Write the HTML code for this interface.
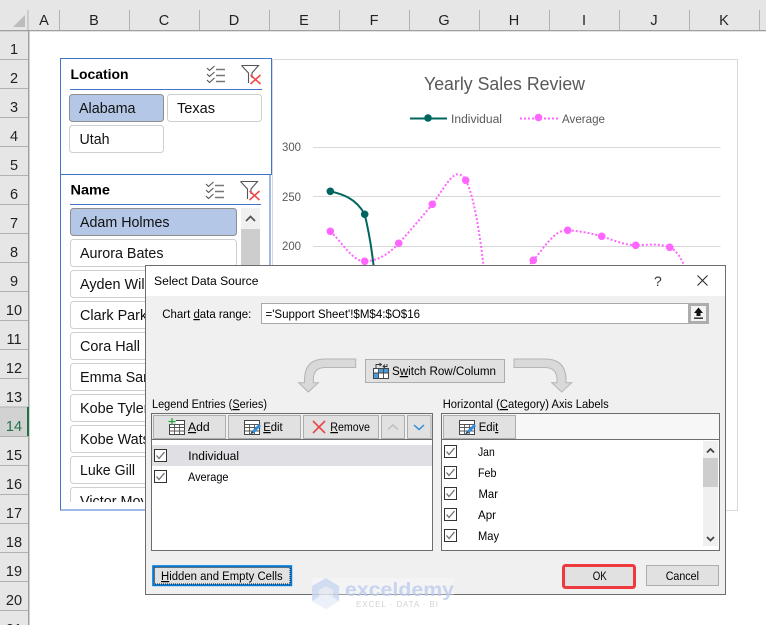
<!DOCTYPE html>
<html><head><meta charset="utf-8"><style>
html,body{margin:0;padding:0;background:#fff}
svg{display:block}
text{font-family:"Liberation Sans",sans-serif;fill:#000;font-size:12.3px}
.h{font-size:14.5px;fill:#222;text-anchor:middle}
.s{font-size:14.4px;fill:#111}
.g{fill:#595959}
.u{text-decoration:underline}
</style></head><body>
<svg width="766" height="625" viewBox="0 0 766 625" xmlns="http://www.w3.org/2000/svg">
<defs>
<clipPath id="c1"><rect x="61" y="205" width="210" height="297"/></clipPath>
<g id="chk"><rect x=".5" y=".5" width="12" height="12" fill="#fff" stroke="#333"/><path d="M2.5 6.5L5 9.5L10.5 3" fill="none" stroke="#707070" stroke-width="1.3"/></g>
<g id="tbl"><rect x=".5" y=".5" width="15" height="14" fill="#fff" stroke="#444"/><path d="M.5 4.5H15.5M.5 7.5H15.5M.5 11H15.5M5.5 4.5V14.5M10.5 4.5V14.5" fill="none" stroke="#555" stroke-width=".9"/></g>
<g id="multi" fill="none"><path d="M0 2L2.5 4.5L7.5 0M0 8L2.5 10.5L7.5 6M0 14L2.5 16.5L7.5 12" stroke="#555" stroke-width="1.1"/><path d="M9 3.5H18M9 9.5H18M9 15.5H18" stroke="#777" stroke-width="1.5"/></g>
<g id="filt" fill="none"><path d="M.5 .5H17.5L11 8V13M7.5 18V8L.5 .5" stroke="#555" stroke-width="1.1"/><path d="M9.5 10L19.5 19M19.5 10L9.5 19" stroke="#f0484a" stroke-width="1.6"/></g>
</defs>

<!-- sheet headers -->
<rect width="766" height="30" fill="#e6e6e6"/>
<rect y="30" width="28" height="595" fill="#e6e6e6"/>
<path d="M25 15V27H13Z" fill="#bcbcbc"/>
<rect x="0" y="407" width="28" height="29" fill="#d2d2d2"/>
<path d="M59.5 10V30M129.5 10V30M199.5 10V30M269.5 10V30M339.5 10V30M409.5 10V30M479.5 10V30M549.5 10V30M619.5 10V30M689.5 10V30M759.5 10V30M28 10V30" stroke="#b1b1b1" fill="none"/>
<path d="M0 59.5H28M0 88.5H28M0 117.5H28M0 146.5H28M0 175.5H28M0 204.5H28M0 233.5H28M0 262.5H28M0 291.5H28M0 320.5H28M0 349.5H28M0 378.5H28M0 407H28M0 436.5H28M0 465.5H28M0 494.5H28M0 523.5H28M0 552.5H28M0 581.5H28M0 610.5H28" stroke="#b1b1b1" fill="none"/>
<rect x="28" y="30" width="1.5" height="595" fill="#a0a0a0"/>
<rect x="0" y="30" width="766" height="1.3" fill="#a0a0a0"/>
<rect x="27" y="407" width="2" height="29" fill="#217346"/>
<g class="colh">
<text class="h" x="44" y="25">A</text><text class="h" x="94" y="25">B</text><text class="h" x="164" y="25">C</text><text class="h" x="234" y="25">D</text><text class="h" x="304" y="25">E</text><text class="h" x="374" y="25">F</text><text class="h" x="444" y="25">G</text><text class="h" x="514" y="25">H</text><text class="h" x="584" y="25">I</text><text class="h" x="654" y="25">J</text><text class="h" x="724" y="25">K</text>
</g>
<text class="h" x="14" y="54">1</text><text class="h" x="14" y="83">2</text><text class="h" x="14" y="112">3</text><text class="h" x="14" y="141">4</text><text class="h" x="14" y="170">5</text><text class="h" x="14" y="199">6</text><text class="h" x="14" y="228">7</text><text class="h" x="14" y="257">8</text><text class="h" x="14" y="286">9</text><text class="h" x="14" y="315">10</text><text class="h" x="14" y="344">11</text><text class="h" x="14" y="373">12</text><text class="h" x="14" y="402">13</text><text class="h" x="14" y="431" style="fill:#217346">14</text><text class="h" x="14" y="460">15</text><text class="h" x="14" y="489">16</text><text class="h" x="14" y="518">17</text><text class="h" x="14" y="547">18</text><text class="h" x="14" y="576">19</text><text class="h" x="14" y="605">20</text><text class="h" x="14" y="634">21</text>

<!-- chart -->
<rect x="272.5" y="59.5" width="465" height="451" fill="#fff" stroke="#d9d9d9"/>
<text x="424" y="90" textLength="161" lengthAdjust="spacingAndGlyphs" class="g" style="font-size:18.6px">Yearly Sales Review</text>
<path d="M410 118.5H447" stroke="#00645f" stroke-width="2"/><circle cx="428" cy="118" r="3.8" fill="#00645f"/>
<text x="451" y="123" textLength="51" lengthAdjust="spacingAndGlyphs" class="g">Individual</text>
<path d="M520 118.5H558" stroke="#ff66ff" stroke-width="2" stroke-dasharray="2 2"/><circle cx="538.5" cy="117.5" r="3.8" fill="#ff66ff"/>
<text x="562" y="123" textLength="43" lengthAdjust="spacingAndGlyphs" class="g">Average</text>
<path d="M313 147.5H720.5M313 196.5H720.5M313 246.5H720.5" stroke="#d9d9d9"/>
<text x="282" y="151" textLength="19" lengthAdjust="spacingAndGlyphs" class="g">300</text>
<text x="282" y="201" textLength="19" lengthAdjust="spacingAndGlyphs" class="g">250</text>
<text x="282" y="250" textLength="19" lengthAdjust="spacingAndGlyphs" class="g">200</text>
<path d="M330.3 191.3C342 194 356 198 364.7 214.3C368 228 372 250 374 270" fill="none" stroke="#00645f" stroke-width="2"/>
<circle cx="330.3" cy="191.3" r="3.8" fill="#00645f"/><circle cx="364.7" cy="214.3" r="3.8" fill="#00645f"/>
<path d="M330.3 231.3C341 241 353 262 364.7 261.3C376 261 387 256 398.7 243.3C410 231 421 218 432.3 204.3C443 190 452 172 459 174.5C463 175.5 465 178 465.7 180.3C474 195 480 235 484 270M525 270L533.3 260.3C544 248 555 229 567.7 230.3C579 231 590 233 601.7 236.3C613 240 624 245 635.7 245.3C647 245 658 243 669.7 247.3C676 250 681 257 686 270" fill="none" stroke="#ff66ff" stroke-width="2" stroke-dasharray="2 2"/>
<g fill="#ff66ff"><circle cx="330.3" cy="231.3" r="3.8"/><circle cx="364.7" cy="261.3" r="3.8"/><circle cx="398.7" cy="243.3" r="3.8"/><circle cx="432.3" cy="204.3" r="3.8"/><circle cx="465.7" cy="180.3" r="3.8"/><circle cx="533.3" cy="260.3" r="3.8"/><circle cx="567.7" cy="230.3" r="3.8"/><circle cx="601.7" cy="236.3" r="3.8"/><circle cx="635.7" cy="245.3" r="3.8"/><circle cx="669.7" cy="247.3" r="3.8"/></g>

<!-- slicer 1 -->
<rect x="60.5" y="58.5" width="211" height="116" fill="#fff" stroke="#3f74c8"/>
<text x="70.5" y="79" textLength="58" lengthAdjust="spacingAndGlyphs" style="font-size:13.5px;font-weight:bold">Location</text>
<use href="#multi" x="207" y="66"/><use href="#filt" x="241" y="65"/>
<rect x="70" y="89" width="192" height="1" fill="#3f74c8"/>
<rect x="69.5" y="94.5" width="94" height="27" rx="3" fill="#b4c7e7" stroke="#8e8e8e"/>
<rect x="167.5" y="94.5" width="94" height="27" rx="3" fill="#fff" stroke="#cfcfcf"/>
<rect x="69.5" y="125.5" width="94" height="27" rx="3" fill="#fff" stroke="#cfcfcf"/>
<text class="s" x="79" y="113" textLength="56.5" lengthAdjust="spacingAndGlyphs">Alabama</text>
<text class="s" x="177" y="113" textLength="38" lengthAdjust="spacingAndGlyphs">Texas</text>
<text class="s" x="79.5" y="144" textLength="30" lengthAdjust="spacingAndGlyphs">Utah</text>

<!-- slicer 2 -->
<rect x="60.5" y="174.5" width="209.5" height="335.5" fill="#fff" stroke="#3f74c8"/>
<text x="70.5" y="194.5" textLength="39.5" lengthAdjust="spacingAndGlyphs" style="font-size:13.5px;font-weight:bold">Name</text>
<use href="#multi" x="206" y="182"/><use href="#filt" x="240" y="181"/>
<rect x="70" y="204" width="191" height="1" fill="#3f74c8"/>
<g clip-path="url(#c1)">
<g fill="#fff" stroke="#cfcfcf">
<rect x="70.5" y="208.5" width="166" height="27" rx="3" fill="#b4c7e7" stroke="#8e8e8e"/>
<rect x="70.5" y="239.5" width="166" height="27" rx="3"/><rect x="70.5" y="270.5" width="166" height="27" rx="3"/><rect x="70.5" y="301.5" width="166" height="27" rx="3"/><rect x="70.5" y="332.5" width="166" height="27" rx="3"/><rect x="70.5" y="363.5" width="166" height="27" rx="3"/><rect x="70.5" y="394.5" width="166" height="27" rx="3"/><rect x="70.5" y="425.5" width="166" height="27" rx="3"/><rect x="70.5" y="456.5" width="166" height="27" rx="3"/><rect x="70.5" y="487.5" width="166" height="27" rx="3"/>
</g>
<text class="s" x="80" y="227" textLength="89.5" lengthAdjust="spacingAndGlyphs">Adam Holmes</text>
<text class="s" x="80" y="258" textLength="83.5" lengthAdjust="spacingAndGlyphs">Aurora Bates</text>
<text class="s" x="80" y="289">Ayden Wilson</text>
<text class="s" x="80" y="320">Clark Parker</text>
<text class="s" x="80" y="351" textLength="60" lengthAdjust="spacingAndGlyphs">Cora Hall</text>
<text class="s" x="80" y="382">Emma Sanders</text>
<text class="s" x="80" y="413">Kobe Tyler</text>
<text class="s" x="80" y="444">Kobe Watson</text>
<text class="s" x="80" y="475" textLength="55" lengthAdjust="spacingAndGlyphs">Luke Gill</text>
<text class="s" x="80" y="506">Victor Moyer</text>
</g>
<rect x="241" y="208" width="19" height="294" fill="#f0f0f0"/>
<rect x="241" y="229" width="19" height="70" fill="#cdcdcd"/>
<path d="M246 221L250.5 216.5L255 221" fill="none" stroke="#555" stroke-width="1.8"/>

<!-- dialog -->
<rect x="145.5" y="265.5" width="580" height="329" fill="#f0f0f0" stroke="#6d6d6d"/>
<rect x="146" y="266" width="579" height="30" fill="#fff"/>
<text x="154" y="285" textLength="104.5" lengthAdjust="spacingAndGlyphs">Select Data Source</text>
<text x="654" y="286" style="font-size:14px;fill:#333">?</text>
<path d="M697.5 275.5L707.5 285.5M707.5 275.5L697.5 285.5" stroke="#222" stroke-width="1"/>

<text x="162.3" y="318" textLength="89" lengthAdjust="spacingAndGlyphs">Chart <tspan class="u">d</tspan>ata range:</text>
<rect x="261.5" y="303.5" width="427" height="20" fill="#fff" stroke="#a8a8a8"/>
<text x="265.5" y="318" textLength="154.5" lengthAdjust="spacingAndGlyphs">='Support Sheet'!$M$4:$O$16</text>
<rect x="688" y="303" width="21" height="21" fill="#adadad"/><rect x="691" y="306" width="15" height="15" fill="#f3f3f3"/>
<path d="M698.5 307.5L703 313H700.5V316H696.5V313H694Z" fill="#111"/><rect x="694" y="317.5" width="9" height="1.3" fill="#111"/>

<path d="M355.7 359H325Q304.5 359 304.5 380V382.7H298.7L308.3 392L318.3 382.7H313.3V380Q313.3 367.5 325 367.5H355.7Z" fill="#d9d9d9" stroke="#b5b5b5"/>
<path d="M514 359H545Q566 359 566 380V382.7H571.7L561.7 392L551.7 382.7H557V380Q557 367.5 545 367.5H514Z" fill="#d9d9d9" stroke="#b5b5b5"/>

<rect x="365.5" y="359.5" width="139" height="23" fill="#e1e1e1" stroke="#adadad"/>
<g transform="translate(373,363)"><rect x=".5" y="5.5" width="15" height="10" fill="#fff" stroke="#444"/><rect x="1" y="10" width="5" height="5" fill="#4a9bdc"/><rect x="6" y="6" width="9" height="4" fill="#4a9bdc"/><path d="M.5 10H15.5M5.5 5.5V15.5M10.5 5.5V15.5" stroke="#444" stroke-width=".9" fill="none"/><path d="M3 5V1.5H8M6.5 0L8.5 1.5L6.5 3M10 3.5H14V1M12 1.5L10 3.5L12 5" stroke="#333" fill="none" stroke-width=".9"/></g>
<text x="392" y="375" textLength="104" lengthAdjust="spacingAndGlyphs">S<tspan class="u">w</tspan>itch Row/Column</text>

<text x="152" y="408" textLength="115" lengthAdjust="spacingAndGlyphs">Legend Entries (<tspan class="u">S</tspan>eries)</text>
<text x="442.7" y="408" textLength="166" lengthAdjust="spacingAndGlyphs">Horizontal (<tspan class="u">C</tspan>ategory) Axis Labels</text>

<!-- left list -->
<rect x="151.5" y="413.5" width="281" height="137" fill="#fff" stroke="#6d6d6d"/>
<path d="M152 439.5H432" stroke="#6d6d6d"/>
<rect x="152" y="414" width="280" height="25" fill="#f0f0f0"/>
<g fill="#e1e1e1" stroke="#adadad"><rect x="153.5" y="415.5" width="72" height="23"/><rect x="228.5" y="415.5" width="72" height="23"/><rect x="303.5" y="415.5" width="75" height="23"/><rect x="381.5" y="415.5" width="23" height="23"/><rect x="407.5" y="415.5" width="23.5" height="23"/></g>
<use href="#tbl" x="169" y="420"/><rect x="167" y="418" width="9" height="6" fill="#e1e1e1"/><path d="M172 418V425M168.5 421.5H175.5" stroke="#22a53b" stroke-width="1.2"/>
<text x="188" y="431" textLength="21.7" lengthAdjust="spacingAndGlyphs"><tspan class="u">A</tspan>dd</text>
<use href="#tbl" x="244" y="420"/><path d="M260 425L252.5 432.5" stroke="#2f8ddb" stroke-width="3"/><path d="M252 431L250 434.5L253.5 433Z" fill="#333"/>
<text x="263.3" y="431" textLength="19.4" lengthAdjust="spacingAndGlyphs"><tspan class="u">E</tspan>dit</text>
<path d="M313 421L325 433M325 421L313 433" stroke="#e8484a" stroke-width="1.6"/>
<text x="330.3" y="431" textLength="39.7" lengthAdjust="spacingAndGlyphs"><tspan class="u">R</tspan>emove</text>
<path d="M388 429.5L393 425L398 429.5" fill="none" stroke="#bdbdbd" stroke-width="1.5"/>
<path d="M414 425L419 429.5L424 425" fill="none" stroke="#2f8ddb" stroke-width="1.5"/>
<rect x="152" y="445" width="280" height="21" fill="#e0dfe3"/>
<use href="#chk" x="154" y="449"/><use href="#chk" x="154" y="470"/>
<text x="188.3" y="460" textLength="50.7" lengthAdjust="spacingAndGlyphs">Individual</text>
<text x="188" y="481" textLength="40.5" lengthAdjust="spacingAndGlyphs">Average</text>

<!-- right list -->
<rect x="441.5" y="413.5" width="278" height="137" fill="#fff" stroke="#6d6d6d"/>
<path d="M442 439.5H719" stroke="#6d6d6d"/>
<rect x="442" y="414" width="277" height="25" fill="#f7f7f7"/>
<rect x="443.5" y="415.5" width="72" height="23" fill="#e1e1e1" stroke="#adadad"/>
<use href="#tbl" x="459" y="420"/><path d="M475 425L467.5 432.5" stroke="#2f8ddb" stroke-width="3"/><path d="M467 431L465 434.5L468.5 433Z" fill="#333"/>
<text x="478.7" y="431" textLength="19.6" lengthAdjust="spacingAndGlyphs">Edi<tspan class="u">t</tspan></text>
<use href="#chk" x="444" y="445"/><use href="#chk" x="444" y="466"/><use href="#chk" x="444" y="487"/><use href="#chk" x="444" y="508"/><use href="#chk" x="444" y="529"/>
<text x="478" y="456" textLength="16.7" lengthAdjust="spacingAndGlyphs">Jan</text>
<text x="478" y="477" textLength="18.5" lengthAdjust="spacingAndGlyphs">Feb</text>
<text x="478.5" y="498" textLength="19.5" lengthAdjust="spacingAndGlyphs">Mar</text>
<text x="478" y="519" textLength="18" lengthAdjust="spacingAndGlyphs">Apr</text>
<text x="478" y="540" textLength="21" lengthAdjust="spacingAndGlyphs">May</text>
<rect x="703" y="441" width="15" height="105" fill="#f0f0f0"/>
<rect x="703" y="458" width="15" height="29" fill="#cdcdcd"/>
<path d="M707 452.5L710.5 449L714 452.5M707 537L710.5 540.5L714 537" fill="none" stroke="#444" stroke-width="1.8"/>

<!-- bottom buttons -->
<rect x="153.2" y="566.2" width="138" height="19" fill="#e1e1e1" stroke="#0078d7" stroke-width="2"/>
<rect x="154.5" y="567.5" width="135.5" height="16.5" fill="none" stroke="#111" stroke-dasharray="1 1"/>
<text x="161" y="580" textLength="121.7" lengthAdjust="spacingAndGlyphs"><tspan class="u">H</tspan>idden and Empty Cells</text>
<rect x="563.5" y="565.5" width="71" height="22" rx="2" fill="#e1e1e1" stroke="#ee3a3f" stroke-width="3"/>
<text x="592.7" y="580" textLength="14" lengthAdjust="spacingAndGlyphs">OK</text>
<rect x="646.5" y="565.5" width="72" height="20" fill="#e1e1e1" stroke="#adadad"/>
<text x="665.7" y="580" textLength="33.3" lengthAdjust="spacingAndGlyphs">Cancel</text>

<!-- watermark -->
<rect x="312" y="578" width="142" height="31" fill="#fff" opacity=".3"/>
<g opacity=".75">
<path d="M326 578L339 586V601L326 609L312 601V586Z" fill="#c5d4ef"/>
<path d="M326 586L333 590V598L326 602L319 598V590Z" fill="#e2e6ee"/>
<path d="M312 601L326 593L339 601L326 609Z" fill="#e6edf8"/>
<text x="345" y="596" textLength="109" lengthAdjust="spacingAndGlyphs" style="font-size:19px;font-weight:bold;fill:#b9c9ee">exceldemy</text>
<text x="356" y="607" textLength="82" style="font-size:8px;fill:#c4c4c4">EXCEL · DATA · BI</text>
</g>
</svg>
</body></html>
